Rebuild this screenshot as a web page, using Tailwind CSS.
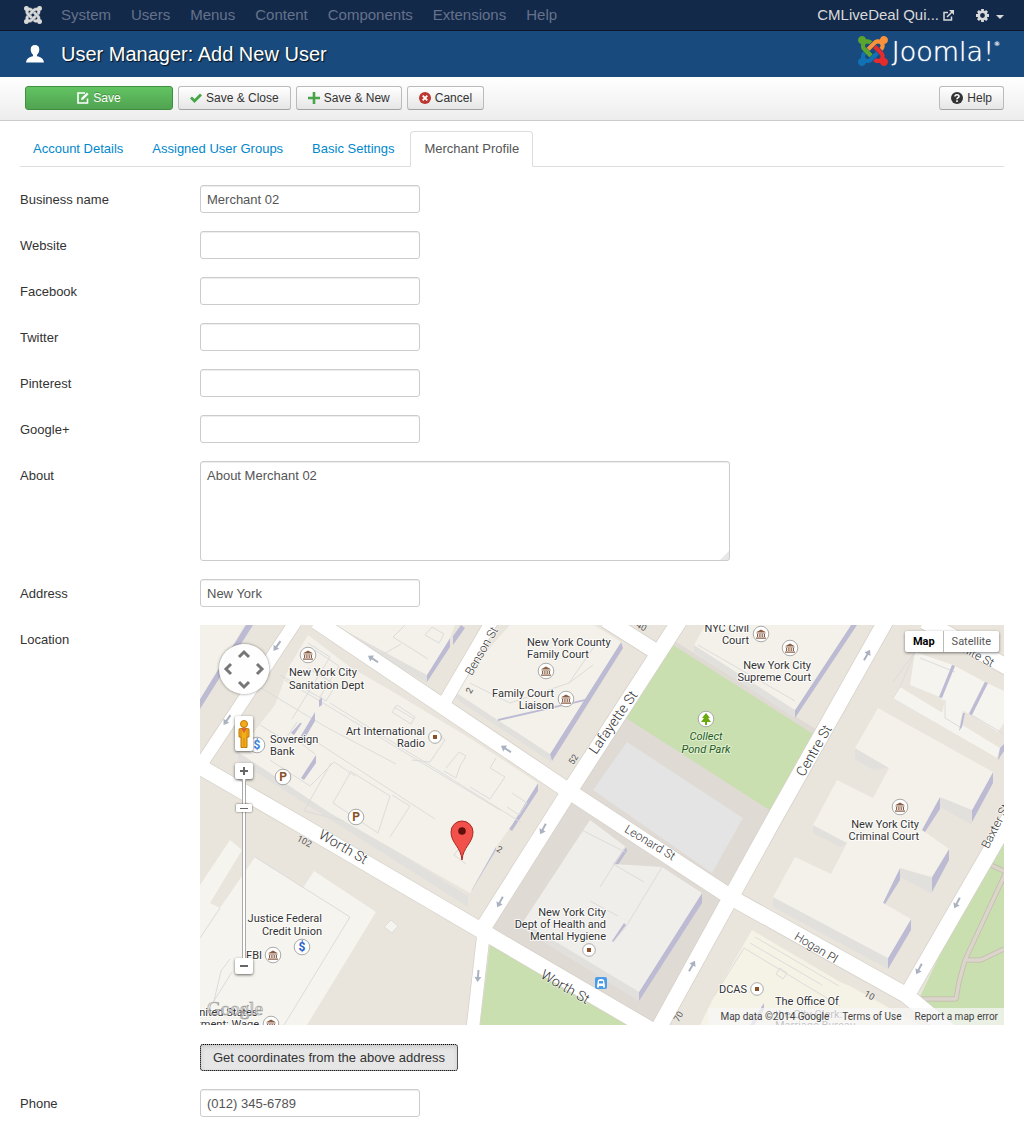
<!DOCTYPE html>
<html lang="en">
<head>
<meta charset="utf-8">
<meta name="viewport" content="width=device-width, initial-scale=1">
<title>User Manager: Add New User</title>
<script src="https://cdn.jsdelivr.net/npm/@tailwindcss/browser@4"></script>
</head>
<body class="min-h-screen bg-white pb-6 font-['Liberation_Sans',Arial,sans-serif] text-[13px] leading-[18px] text-[#333]">

<svg class="hidden" aria-hidden="true">
  <defs>
    <g id="joomla-tl"><path d="M.6 92.1C.6 58.8 27.4 32 60.4 32c30 0 54.5 21.9 59.2 50.2 32.6-7.6 67.100.6 96.5 30l-44.300 44.300c-20.500-20.500-42.600-16.300-55.400-3.500-14.300 14.300-14.300 37.900 0 52.200l99.500 99.500-44 44.300c-87.700-87.200-49.700-49.700-99.800-99.700-26.800-26.500-35-64.800-24.800-98.900C20.400 144.600.6 120.700.6 92.100z"/></g>
    <g id="joomla-tr"><path d="M130.1 208.5l44.300 44.300c10-10 89.700-89.700 99.700-99.800 14.300-14.300 37.600-14.300 51.900 0 12.800 12.800 17 35-3.500 55.400l44 44.300c31.200-31.200 38.500-67.600 28.900-101.200 29.200-4.100 51.900-29.200 51.900-59.500 0-33.200-26.800-60.100-59.800-60.100-30.300 0-55.400 22.500-59.500 51.600-33.800-9.900-71.700-1.500-98.300 25.100-18.300 19.100-71.100 71.500-99.600 99.900z"/></g>
    <g id="joomla-br"><path d="M396.400 360.700c8.200-32.700-.9-68.500-26.300-93.900-11.800-12.200 5 4.700-99.500-99.700l-44.300 44.300 99.700 99.700c14.300 14.300 14.300 37.600 0 51.900-12.800 12.800-35 17-55.400-3.500l-44 44.300c27.600 30.200 68 38.800 102.700 28 5.500 27.400 29.700 48.100 58.900 48.100 33 0 59.800-26.800 59.800-60.100 0-30.200-22.500-55-51.600-59.100z"/></g>
    <g id="joomla-bl"><path d="M312.100 307.600l-44-44.300c-87 86.400-50.400 50.400-99.700 99.800-14.300 14.300-37.600 14.300-51.900 0-13.100-13.400-16.900-35.300 3.200-55.400l-44-44.300c-30.200 30.200-38 65.200-29.500 98.300-26.700 6-46.200 29.900-46.200 58.200C0 453.200 26.800 480 59.800 480c28.600 0 52.500-19.800 58.600-46.700 32.700 8.200 68.500-.6 94.200-26 32.100-32 12.200-12.400 99.500-99.700z"/></g>
  </defs>
</svg>

<nav class="flex h-[31px] items-center border-b border-[#0d1729] bg-[#13294a] pr-5 pl-6 text-[15px] text-[#65728a]" aria-label="Main">
  <a href="#" class="mr-[19px]" aria-label="Control panel">
    <svg class="h-[18px] w-[18px] fill-[#d9d9d9] stroke-[#d9d9d9] stroke-[12]" viewBox="0 32 448 448"><use href="#joomla-tl"/><use href="#joomla-tr"/><use href="#joomla-br"/><use href="#joomla-bl"/></svg>
  </a>
  <div class="flex gap-5">
    <a href="#">System</a><a href="#">Users</a><a href="#">Menus</a><a href="#">Content</a><a href="#">Components</a><a href="#">Extensions</a><a href="#">Help</a>
  </div>
  <a href="#" class="ml-auto flex items-center gap-1 text-[#d9d9d9]">CMLiveDeal Qui...
    <svg class="h-[11px] w-[11px]" viewBox="0 0 11 11" fill="none" stroke="currentColor" stroke-width="1.5"><path d="M5 2.500H1V10h7.500V6.500M4 7l5-5"/><path d="M6 0h5v5z" fill="currentColor" stroke="none"/></svg>
  </a>
  <button type="button" class="ml-[22px] flex items-center gap-[7px] text-[#d9d9d9]" aria-label="User menu">
    <svg class="h-[13px] w-[13px]" viewBox="0 0 13 13"><g fill="none" stroke="currentColor"><circle cx="6.500" cy="6.500" r="3.700" stroke-width="2.600"/><path d="M6.500 0v2.500M6.500 10.500V13M0 6.500h2.500M10.500 6.500H13M1.900 1.900l1.700 1.700M9.400 9.400l1.700 1.700M11.100 1.900L9.400 3.600M3.600 9.400l-1.700 1.700" stroke-width="2.800"/></g></svg>
    <svg class="mt-1 h-1 w-2 fill-current" viewBox="0 0 8 4"><path d="M0 0h8L4 4z"/></svg>
  </button>
</nav>

<header class="flex h-[46px] items-center bg-[#184a7d] pr-6 pl-[26px] text-white">
  <svg class="mr-[17px] h-[18px] w-[18px] fill-white" viewBox="0 0 18 18"><path d="M9 0c2.800 0 4.300 1.700 4.300 4.500 0 2.200-.9 4.200-2.300 5.300v1.500c3.800.8 6.500 2.600 7 6.200H0c.5-3.600 3.200-5.400 7-6.200V9.800C5.600 8.700 4.700 6.700 4.700 4.500 4.700 1.700 6.200 0 9 0z"/></svg>
  <h1 class="text-xl text-shadow-[1px_1px_1px_rgba(0,0,0,.8)]">User Manager: Add New User</h1>
  <div class="ml-auto flex items-center gap-1 pb-[6px]">
    <svg class="h-[30px] w-[30px]" viewBox="0 32 448 448"><use href="#joomla-tl" fill="#5ba52f"/><use href="#joomla-tr" fill="#f9923a"/><use href="#joomla-br" fill="#e52b2c"/><use href="#joomla-bl" fill="#1270b4"/><path fill="#5ba52f" d="M116 205l99.500 99.500-44 44.300L80 257z"/></svg>
    <span class="flex items-start pt-[2px] font-['DejaVu_Sans',sans-serif] text-[27px] leading-[30px] font-extralight text-shadow-[0_0_1px_#fff]">Joomla!<span class="text-[6px] leading-[14px] font-normal">®</span></span>
  </div>
</header>

<div class="flex h-11 items-start gap-[5px] border-b border-[#ccc] bg-linear-to-b from-white to-[#ededed] pt-[9px] pr-5 pl-[25px] text-xs text-[#333]" role="toolbar">
  <button type="button" class="flex h-6 w-[148px] items-center justify-center gap-1 rounded-[3px] border border-[#3f8f3f] bg-linear-to-b from-[#62c462] to-[#51a351] text-white text-shadow-[0_-1px_0_rgba(0,0,0,.25)]">
    <svg class="h-3 w-3" viewBox="0 0 12 12" fill="none" stroke="#fff" stroke-width="1.600"><path d="M8 1H1v10h9.500V6.500"/><path d="M4 8l.6-2.200L10 .6l1.600 1.600L6.200 7.500z" fill="#fff" stroke="none"/></svg>Save</button>
  <button type="button" class="flex h-6 items-center gap-1 rounded-[3px] border border-[#bbb] border-b-[#a2a2a2] bg-linear-to-b from-white to-[#e6e6e6] px-[11px]">
    <svg class="h-3 w-3" viewBox="0 0 12 12" fill="none" stroke="#46a546" stroke-width="2.800"><path d="M1 5.500l3.500 3.500L11 2.500"/></svg>Save &amp; Close</button>
  <button type="button" class="flex h-6 items-center gap-1 rounded-[3px] border border-[#bbb] border-b-[#a2a2a2] bg-linear-to-b from-white to-[#e6e6e6] px-[11px]">
    <svg class="h-3 w-3" viewBox="0 0 12 12" fill="none" stroke="#46a546" stroke-width="2.600"><path d="M6 0v12M0 6h12"/></svg>Save &amp; New</button>
  <button type="button" class="flex h-6 items-center gap-1 rounded-[3px] border border-[#bbb] border-b-[#a2a2a2] bg-linear-to-b from-white to-[#e6e6e6] px-[11px]">
    <svg class="h-3 w-3" viewBox="0 0 12 12"><circle cx="6" cy="6" r="6" fill="#bd362f"/><path d="M3.700 3.700l4.600 4.600M8.300 3.700L3.700 8.300" stroke="#fff" stroke-width="1.800"/></svg>Cancel</button>
  <button type="button" class="ml-auto flex h-6 items-center gap-1 rounded-[3px] border border-[#bbb] border-b-[#a2a2a2] bg-linear-to-b from-white to-[#e6e6e6] px-[11px]">
    <svg class="h-3 w-3" viewBox="0 0 12 12" fill="none"><circle cx="6" cy="6" r="6" fill="#333"/><path d="M4 4.600C4 2.200 8 2.300 8 4.400 8 5.800 6 5.600 6 7.300M6 8.300V10" stroke="#fff" stroke-width="1.600"/></svg>Help</button>
</div>

<main class="px-5 pt-[10px]">
  <div class="mb-[18px] flex items-end gap-[3px] border-b border-[#ddd] text-[#08c]" role="tablist">
    <a href="#" role="tab" class="px-[13px] pt-[9px] pb-2">Account Details</a>
    <a href="#" role="tab" class="px-[13px] pt-[9px] pb-2">Assigned User Groups</a>
    <a href="#" role="tab" class="px-[13px] pt-[9px] pb-2">Basic Settings</a>
    <a href="#" role="tab" aria-selected="true" class="-mb-px rounded-t-[4px] border border-[#ddd] border-b-white bg-white px-[13px] py-2 text-[#555]">Merchant Profile</a>
  </div>

  <form class="grid grid-cols-[180px_minmax(0,1fr)] gap-y-[18px]">
    <label for="name" class="pt-[6px]">Business name</label>
    <input id="name" value="Merchant 02" class="h-7 w-[220px] rounded-[3px] border border-[#ccc] px-[6px] text-[#555] shadow-[inset_0_1px_1px_rgba(0,0,0,.075)]">
    <label for="web" class="pt-[6px]">Website</label>
    <input id="web" class="h-7 w-[220px] rounded-[3px] border border-[#ccc] px-[6px] text-[#555] shadow-[inset_0_1px_1px_rgba(0,0,0,.075)]">
    <label for="fb" class="pt-[6px]">Facebook</label>
    <input id="fb" class="h-7 w-[220px] rounded-[3px] border border-[#ccc] px-[6px] text-[#555] shadow-[inset_0_1px_1px_rgba(0,0,0,.075)]">
    <label for="tw" class="pt-[6px]">Twitter</label>
    <input id="tw" class="h-7 w-[220px] rounded-[3px] border border-[#ccc] px-[6px] text-[#555] shadow-[inset_0_1px_1px_rgba(0,0,0,.075)]">
    <label for="pin" class="pt-[6px]">Pinterest</label>
    <input id="pin" class="h-7 w-[220px] rounded-[3px] border border-[#ccc] px-[6px] text-[#555] shadow-[inset_0_1px_1px_rgba(0,0,0,.075)]">
    <label for="gp" class="pt-[6px]">Google+</label>
    <input id="gp" class="h-7 w-[220px] rounded-[3px] border border-[#ccc] px-[6px] text-[#555] shadow-[inset_0_1px_1px_rgba(0,0,0,.075)]">
    <label for="about" class="pt-[6px]">About</label>
    <textarea id="about" class="h-[100px] w-[530px] max-w-full resize-none rounded-[3px] border border-[#ccc] bg-[linear-gradient(135deg,#fff_calc(100%_-_7px),#e8e8e8_calc(100%_-_6px))] px-[6px] py-[5px] text-[#555] shadow-[inset_0_1px_1px_rgba(0,0,0,.075)]">About Merchant 02</textarea>
    <label for="addr" class="pt-[6px]">Address</label>
    <input id="addr" value="New York" class="h-7 w-[220px] rounded-[3px] border border-[#ccc] px-[6px] text-[#555] shadow-[inset_0_1px_1px_rgba(0,0,0,.075)]">

    <span class="pt-[6px]">Location</span>
    <div>
      <div class="relative h-[400px] overflow-hidden bg-[#e9e5dc] font-[Roboto,sans-serif]">
        <svg class="h-full w-full" viewBox="0 0 804 400" preserveAspectRatio="xMidYMid slice" role="img" aria-label="Street map of lower Manhattan">
          <defs>
            <g id="court"><circle r="7.800" fill="#fff" stroke="#aaa"/><path d="M-4.500-2L0-4.500 4.500-2zM-4.500-1.500h9v1h-9zM-4 0h1.200v3H-4zM-1.700 0h1.200v3h-1.200zM.6 0h1.200v3H.6zM2.800 0H4v3H2.800zM-5 3.500H5v1.300H-5z" fill="#8a5f45"/></g>
            <g id="spot"><circle r="6.300" fill="#fff" stroke="#aaa"/><path d="M-2-2h4v4h-4z" fill="#8a5028"/></g>
            <g id="arrow"><path d="M-6-1H1V-3.500L6 0 1 3.500V1h-7z" fill="#aab1bf"/></g>
            <g id="disc"><circle r="7.800" fill="#fff" stroke="#aaa"/></g>
          </defs>

          <!-- blocks and green areas -->
          <path fill="#dfdad4" d="M473 15L622 108 535 275 462 400 440 400 285 306 367 165z"/>
          <path fill="#c9dfaf" d="M473 20L613 109 571 186 426 93zM290 319L280 400h150zM804 205L786 232 718 376 748 400h56z"/>
          <path fill="#e4e4e4" d="M427 117L543 193 512 248 393 165z"/>
          <path fill="none" stroke="#c4bbae" stroke-width="5" stroke-linejoin="round" d="M782 236l24 11-41 88-6 22-3 17h-45M765 335h16l23-11"/>
          <path fill="none" stroke="#dcd5cc" stroke-width="3.500" stroke-linejoin="round" d="M782 236l24 11-41 88-6 22-3 17h-45M765 335h16l23-11"/>

          <!-- building walls -->
          <g fill="#e2e0dd">
            <path d="M323 297v7l116 72v-9zM573 272v10l115 62v-11zM655 123v11l18 11 16-2zM613 200v8l28 14 6-4zM740 172v10l32 18v-15zM700 243v9l32 17v-16zM494 20v7l101 66v-8z"/>
            <path d="M252 62v9l99 66v-8zM135 0v4l92 54v-8zM38 127v9l230 146v-11zM700 62l-7 11 107 62v-10z"/>
          </g>
          <g fill="#bcbbd3">
            <path d="M502 268v10l-63 98v-9zM793 147v11l-21 39v-12zM740 172v12l-17 26-5-3zM749 224v11l-17 32v-15zM700 243v12l-15 24-3-2zM711 294v11l-23 39v-11zM651 0h6l-62 93v-8zM421 17l2 6-71 113-2-7z"/>
            <path d="M250 13v9l-23 35v-8zM338 158v8l-26 40-4-3zM296 216v9l-24 40-3-4zM46 0h7L0 84V74zM426 222l1 4-34 52-3-1zM261 0l4 3-12 17v-9z"/>
          </g>

          <!-- roofs -->
          <g fill="#f3f1ea">
            <path d="M108 10L150 42 190 65 268 112 338 158 312 200 296 222 270 268 130 188 38 127 75 80 90 40z"/>
            <path d="M0 0h45L0 74zM135 0h120l-5 13-23 37zM310 0h84l27 17-71 112-98-64z"/>
            <path d="M505 0h146l-56 85-101-65z"/>
            <path d="M678 83L793 147 772 185 740 172 722 205 749 224 732 252 700 243 683 278 711 294 688 333 573 272 595 232 631 249 647 218 613 200 637 155 673 173 689 143 655 123z"/>
          </g>
          <path fill="#efeeea" d="M390 195l36 27-13 17 49 3 40 26-63 99-116-70z"/>
          <g fill="#f5f4ee">
            <path d="M30 215l12 10-32 53 10 5 35-51 48 31 11-17 62 41-69 113H0V260z"/>
            <path d="M191 295l7 6-6 7-8-6z" stroke="#ddd"/>
            <path d="M552 305l88 52 10 4 70 39H500l18-36z" fill="#f5f2e6"/>
            <path d="M715 27l38 13-13 32-30-12zM753 40l32 17-16 32-29-16zM785 57l19 9v32l-6 9-28-18zM700 62l100 61-3 10-104-60zM745 75l18 10-4 18-18-10z"/>
          </g>

          <!-- roof outlines -->
          <g fill="none" stroke="#dddcdb">
            <path d="M55 232l95 60-66 108M0 313l20-30M30 334l-9 12-7 30M32 347l-20 32"/>
            <path d="M108 18l22 14-38 62M80 50l46 26 10-16-28-17M115 25l24 16-19 31M56 60l70 42 70 37M60 100l25 15 12-18M85 55l215 130M130 78l192 120M97 115l18 14M115 116l120 78M70 135l40 26 24-24M134 137l21 14M131 138l-27 48 40 10M150 148l-17 30 45 30 12-37-40-25M192 170l18 11-20 31M194 82l20 12 M197 80l18 12-4 7-19-12z"/>
            <path d="M235 106l10 9-15 22-18-2M246 143l13-16 7 4-6 10-4 12-12-7M270 162l20 12 15-22-15-9 6-10M312 168l15 10-8 12-12-8M260 222l-6 8 12 9M173 35l28-16M205 0l-12 12 35 22M232 2l12 7-5 9-14-8z"/>
            <path d="M270 58l40 20 59-20 24-35 12-9M393 40L369 58M498 20l97 56M360 194l65 33M413 239l31 18M462 242l-35 58-14 17M390 276l28 15M425 222l-25 40"/>
            <path d="M555 312l84 49M550 318l72 42M514 371l30-48 96 58M580 343l7 5-4 6-7-5zM693 73l7-11 15-35M715 27l-22 30M720 33l35 14M753 40l-13 33M785 57l-16 32M770 89l34 20M745 75v18l15 9"/>
          </g>
          <g fill="#bcbbd3"><path d="M390 73l-1 2-91 21v-2zM752 40l3 1-13 32-3-1zM785 57l3 1-16 32-3-1zM763 88l-4 18 3-4 3-14zM800 123l4-4v7l-6 9zM426 300l-13 17-1-1 12-18zM564 385l-10 15h-4l14-22zM119 75l3-3v8l-3 2zM115 87v9l-13 22-3-4zM102 98l-8 12-3-2 9-10zM116 130v8l-12 17-3-2z"/></g>

          <!-- road edges, then road surface -->
          <g fill="none" stroke="#d5d1c9">
            <g stroke-width="17"><path d="M-10 136L101 200 282 306 460 410M116-4L367 165 532 273 706 370 754 410M480-5L372 162 283 303M688-8L573 196 531 272 455 410M406-5L455 26M724-4l90 50M814 185L706 372"/></g>
            <g stroke-width="14"><path d="M96-4L0 141M284 305L272 410M292-4L243 80"/></g>
          </g>
          <g fill="none" stroke="#fff">
            <g stroke-width="15.500"><path d="M-10 136L101 200 282 306 460 410M116-4L367 165 532 273 706 370 754 410M480-5L372 162 283 303M688-8L573 196 531 272 455 410M406-5L455 26M724-4l90 50M814 185L706 372"/></g>
            <g stroke-width="12.500"><path d="M96-4L0 141M284 305L272 410M292-4L243 80"/></g>
          </g>

          <use href="#arrow" transform="translate(77 21) rotate(125)"/><use href="#arrow" transform="translate(27 95) rotate(125)"/>
          <use href="#arrow" transform="translate(173 34) rotate(213)"/><use href="#arrow" transform="translate(306 124) rotate(213)"/>
          <use href="#arrow" transform="translate(343 204) rotate(118)"/><use href="#arrow" transform="translate(300 277) rotate(118)"/>
          <use href="#arrow" transform="translate(278 351) rotate(95)"/><use href="#arrow" transform="translate(492 341) rotate(-60)"/>
          <use href="#arrow" transform="translate(667 30) rotate(-60)"/><use href="#arrow" transform="translate(757 278) rotate(118)"/><use href="#arrow" transform="translate(719 344) rotate(118)"/>

          <!-- street names -->
          <g fill="#333" stroke="#fff" stroke-opacity=".7" stroke-width="1.500" stroke-linejoin="round" paint-order="stroke" font-size="14" font-weight="300" text-anchor="middle">
            <text transform="translate(417 100) rotate(-55)">Lafayette St</text>
            <text transform="translate(618 128) rotate(-60)">Centre St</text>
            <text transform="translate(141 226) rotate(30)">Worth St</text>
            <text transform="translate(363 366) rotate(30)">Worth St</text>
            <g font-size="12">
              <text transform="translate(448 221) rotate(31)">Leonard St</text>
              <text transform="translate(614 326) rotate(31)">Hogan Pl</text>
              <text transform="translate(285 28) rotate(-60)">Benson St</text>
              <text transform="translate(799 203) rotate(-63)">Baxter St</text>
              <text transform="translate(772 32) rotate(28)">White St</text>
            </g>
            <g font-size="9" font-weight="400" fill="#555" stroke="#efece6">
              <text transform="translate(376 136) rotate(-58)">52</text><text transform="translate(103 219) rotate(28)">102</text>
              <text transform="translate(298 227) rotate(30)">2</text><text transform="translate(272 67) rotate(-60)">2</text>
              <text transform="translate(481 393) rotate(-60)">70</text><text transform="translate(668 373) rotate(30)">10</text><text transform="translate(440 4) rotate(30)">40</text>
            </g>
          </g>

          <!-- places -->
          <g fill="#333" stroke="#fff" stroke-opacity=".85" stroke-width="2" stroke-linejoin="round" paint-order="stroke" font-size="11">
            <text x="89" y="51">New York City</text><text x="89" y="64">Sanitation Dept</text>
            <text x="70" y="118">Sovereign</text><text x="70" y="130">Bank</text>
            <text x="225" y="110" text-anchor="end">Art International</text><text x="225" y="122" text-anchor="end">Radio</text>
            <text x="327" y="21">New York County</text><text x="327" y="33">Family Court</text>
            <text x="354" y="72" text-anchor="end">Family Court</text><text x="354" y="84" text-anchor="end">Liaison</text>
            <text x="549" y="7" text-anchor="end">NYC Civil</text><text x="549" y="19" text-anchor="end">Court</text>
            <text x="611" y="44" text-anchor="end">New York City</text><text x="611" y="56" text-anchor="end">Supreme Court</text>
            <text x="719" y="203" text-anchor="end">New York City</text><text x="719" y="215" text-anchor="end">Criminal Court</text>
            <text x="406" y="291" text-anchor="end">New York City</text><text x="406" y="303" text-anchor="end">Dept of Health and</text><text x="406" y="315" text-anchor="end">Mental Hygiene</text>
            <text x="122" y="297" text-anchor="end">Justice Federal</text><text x="122" y="310" text-anchor="end">Credit Union</text>
            <text x="62" y="334" text-anchor="end">FBI</text><text x="547" y="368" text-anchor="end">DCAS</text>
            <text x="575" y="380">The Office Of</text><text x="575" y="393">the City Clerk:</text><text x="575" y="404">Marriage Bureau</text>
            <text x="-8" y="391">United States</text><text x="59" y="403" text-anchor="end">Department: Wage</text>
            <g fill="#1e5a1e" stroke="#e6f2d8" font-style="italic" text-anchor="middle"><text x="506" y="115">Collect</text><text x="506" y="128">Pond Park</text></g>
          </g>
          <use href="#court" x="108" y="30"/><use href="#court" x="346" y="46"/><use href="#court" x="366" y="74"/><use href="#court" x="561" y="9"/><use href="#court" x="590" y="23"/><use href="#court" x="700" y="182"/><use href="#court" x="73" y="330"/><use href="#court" x="71" y="399"/>
          <use href="#spot" x="235" y="112"/><use href="#spot" x="389" y="325"/><use href="#spot" x="557" y="364"/>
          <use href="#disc" x="83" y="152"/><use href="#disc" x="156" y="192"/><use href="#disc" x="57" y="120"/><use href="#disc" x="102" y="322"/><use href="#disc" x="506" y="94"/>
          <g font-size="12" font-weight="700" text-anchor="middle"><text x="83" y="156" fill="#8a5028">P</text><text x="156" y="196" fill="#8a5028">P</text><text x="57" y="124" fill="#3b82dc">$</text><text x="102" y="326" fill="#2a62c8">$</text></g>
          <path fill="#6aaa10" d="M506 88l4 5h-2l3 4h-4v3h-2v-3h-4l3-4h-2z"/>
          <rect x="395" y="352" width="12" height="12" rx="2" fill="#4a9be8"/><path fill="#fff" fill-rule="evenodd" d="M398 355q3-2 6 0l1 6h-8zM399 356h4v2.500h-4zM397 361h2v1.500h-2zM403 361h2v1.500h-2z"/>

          <!-- marker -->
          <path d="M262 235c-1-13-11-17-11-28a11 11 0 0 1 22 0c0 11-10 15-11 28z" fill="#f2504a" stroke="#a62a22"/><circle cx="262" cy="206" r="3.800" fill="#5f100c"/>
          <text x="7" y="390" font-family="Liberation Serif, serif" font-size="19" fill="#fff" fill-opacity=".65" stroke="#999" stroke-width=".7">Google</text>
        </svg>

        <!-- map controls -->
        <div class="absolute top-[19px] left-[19px] h-[50px] w-[50px] rounded-full bg-white/95 shadow-[0_0_3px_rgba(0,0,0,.5)]">
          <svg class="h-full w-full" viewBox="0 0 50 50" fill="none" stroke="#777" stroke-width="3"><path d="M20 13l5-5 5 5M20 38l5 5 5-5M12 20l-5 5 5 5M38 20l5 5-5 5"/></svg>
        </div>
        <div class="absolute top-[91px] left-[35px] flex w-[18px] flex-col items-center">
          <button type="button" aria-label="Street View" class="flex h-[35px] w-[18px] items-center justify-center rounded-[2px] bg-white shadow-[0_1px_3px_rgba(0,0,0,.6)]">
            <svg class="h-7 w-3" viewBox="0 0 12 28"><g fill="#f5ad17" stroke="#b97808"><circle cx="6" cy="4" r="3.500"/><path d="M1 9q5-2 10 0v8H9v10.500H6.500h-1H3V17H1z"/></g><path d="M3 8.500h6L6 13z" fill="#e0603a"/><path d="M3 10v8M9 10v8M6 18v9" stroke="#c98510" stroke-width=".8"/></svg>
          </button>
          <button type="button" aria-label="Zoom in" class="mt-3 flex h-4 w-[18px] items-center justify-center rounded-[2px] bg-white shadow-[0_1px_3px_rgba(0,0,0,.6)]"><svg class="h-[10px] w-[10px]" viewBox="0 0 10 10" stroke="#666" stroke-width="2"><path d="M5 1v8M1 5h8"/></svg></button>
          <div class="relative h-[179px] w-1 border-x border-[#aaa] bg-white">
            <span class="absolute top-[25px] -left-[7px] flex h-2 w-4 items-center justify-center rounded-[1px] bg-white shadow-[0_0_2px_rgba(0,0,0,.7)]"><i class="h-px w-2 bg-[#666]"></i></span>
          </div>
          <button type="button" aria-label="Zoom out" class="flex h-4 w-[18px] items-center justify-center rounded-[2px] bg-white shadow-[0_1px_3px_rgba(0,0,0,.6)]"><i class="h-[2px] w-2 bg-[#666]"></i></button>
        </div>
        <div class="absolute top-[6px] right-[5px] flex h-[21px] rounded-[2px] bg-white text-[11px] leading-[21px] text-[#555] shadow-[0_1px_3px_rgba(0,0,0,.5)]">
          <button type="button" class="border-r border-[#bbb] px-2 font-bold text-black">Map</button>
          <button type="button" class="px-2">Satellite</button>
        </div>
        <div class="absolute right-0 bottom-0 flex h-[17px] gap-[13px] bg-[#f5f5f5]/75 pr-[6px] pl-3 text-[10px] leading-[17px] text-[#444]">
          <span>Map data ©2014 Google</span><a href="#">Terms of Use</a><a href="#">Report a map error</a>
        </div>
      </div>
      <button type="button" class="mt-[19px] block h-[27px] rounded-[3px] border border-[#aaa] bg-[#e6e6e6] px-3 text-[#333] shadow-[inset_0_2px_4px_rgba(0,0,0,.12)] outline-1 -outline-offset-1 outline-dotted outline-black">Get coordinates from the above address</button>
    </div>

    <label for="phone" class="pt-[6px]">Phone</label>
    <input id="phone" value="(012) 345-6789" class="h-7 w-[220px] rounded-[3px] border border-[#ccc] px-[6px] text-[#555] shadow-[inset_0_1px_1px_rgba(0,0,0,.075)]">
  </form>
</main>
</body>
</html>
